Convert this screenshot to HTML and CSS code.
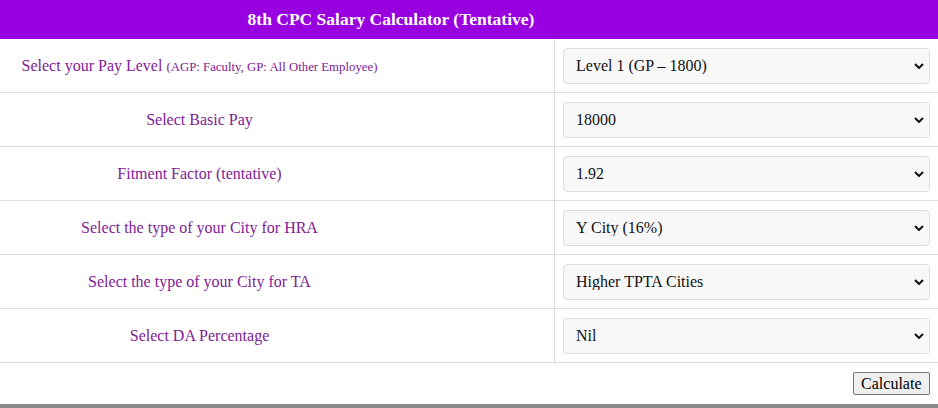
FILE: index.html
```html
<!DOCTYPE html>
<html lang="en">
<head>
<meta charset="utf-8">
<title>8th CPC Salary Calculator (Tentative)</title>
<link rel="stylesheet" href="styles.css">
</head>
<body>
<div class="calc">
  <div class="calc-head">8th CPC Salary Calculator (Tentative)</div>
  <div class="calc-grid">
    <div class="label"><span>Select your Pay Level <small>(AGP: Faculty, GP: All Other Employee)</small></span></div>
    <div class="field"><div class="sel"><select><option>Level 1 (GP – 1800)</option></select><svg class="chev" viewBox="0 0 10 6" width="10" height="6"><path d="M1 1 L5 5 L9 1" fill="none" stroke="#111" stroke-width="2"/></svg></div></div>

    <div class="label"><span>Select Basic Pay</span></div>
    <div class="field"><div class="sel"><select><option>18000</option></select><svg class="chev" viewBox="0 0 10 6" width="10" height="6"><path d="M1 1 L5 5 L9 1" fill="none" stroke="#111" stroke-width="2"/></svg></div></div>

    <div class="label"><span>Fitment Factor (tentative)</span></div>
    <div class="field"><div class="sel"><select><option>1.92</option></select><svg class="chev" viewBox="0 0 10 6" width="10" height="6"><path d="M1 1 L5 5 L9 1" fill="none" stroke="#111" stroke-width="2"/></svg></div></div>

    <div class="label"><span>Select the type of your City for HRA</span></div>
    <div class="field"><div class="sel"><select><option>Y City (16%)</option></select><svg class="chev" viewBox="0 0 10 6" width="10" height="6"><path d="M1 1 L5 5 L9 1" fill="none" stroke="#111" stroke-width="2"/></svg></div></div>

    <div class="label"><span>Select the type of your City for TA</span></div>
    <div class="field"><div class="sel"><select><option>Higher TPTA Cities</option></select><svg class="chev" viewBox="0 0 10 6" width="10" height="6"><path d="M1 1 L5 5 L9 1" fill="none" stroke="#111" stroke-width="2"/></svg></div></div>

    <div class="label"><span>Select DA Percentage</span></div>
    <div class="field"><div class="sel"><select><option>Nil</option></select><svg class="chev" viewBox="0 0 10 6" width="10" height="6"><path d="M1 1 L5 5 L9 1" fill="none" stroke="#111" stroke-width="2"/></svg></div></div>
  </div>
  <div class="calc-foot"><button type="button">Calculate</button></div>
</div>
<div class="bottom-bar"></div>
</body>
</html>
```
FILE: styles.css
```css
html, body {
  margin: 0;
  padding: 0;
  background: #fff;
  font-family: "Liberation Serif", "DejaVu Serif", serif;
}

.calc {
  width: 938px;
}

.calc-head {
  height: 39px;
  background: #9900e0;
  color: #fff;
  font-weight: bold;
  font-size: 17.5px;
  display: flex;
  align-items: center;
  justify-content: center;
  padding-right: 156px;
}

.calc-grid {
  display: grid;
  grid-template-columns: 555px 1fr;
}

.label {
  height: 53px;
  border-bottom: 1px solid #dddddd;
  border-right: 1px solid #dddddd;
  display: flex;
  align-items: center;
  justify-content: center;
  padding-right: 155px;
  color: #7e2196;
  font-size: 16px;
  text-align: center;
  box-sizing: content-box;
  width: 399px;
}

.label small {
  font-size: 12.8px;
}

.field {
  height: 53px;
  border-bottom: 1px solid #dddddd;
  display: flex;
  align-items: center;
  padding: 0 8px;
}

.sel {
  position: relative;
  width: 100%;
}

.sel select {
  appearance: none;
  -webkit-appearance: none;
  width: 100%;
  height: 36px;
  box-sizing: border-box;
  background: #f8f8f8;
  border: 1px solid #dddddd;
  border-radius: 4px;
  padding: 0 30px 0 12px;
  font-family: "Liberation Serif", "DejaVu Serif", serif;
  font-size: 16px;
  color: #111;
  display: block;
}

.chev {
  position: absolute;
  right: 6px;
  top: 15px;
  pointer-events: none;
}

.calc-foot {
  display: flex;
  justify-content: flex-end;
  padding: 9px 8px 9px 0;
}

.calc-foot button {
  font-family: "Liberation Serif", "DejaVu Serif", serif;
  font-size: 16px;
  color: #000;
  background: #efefef;
  border: 1px solid #767676;
  border-radius: 2px;
  height: 23px;
  padding: 0 7.5px;
  line-height: 1;
}

.bottom-bar {
  height: 4px;
  background: #8a8a8a;
}
```
